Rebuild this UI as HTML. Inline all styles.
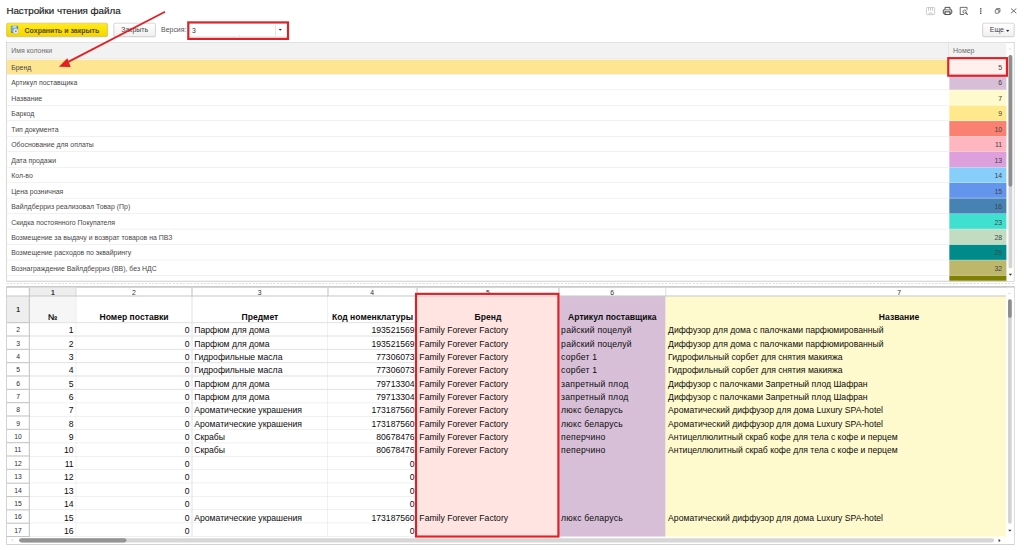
<!DOCTYPE html>
<html><head><meta charset="utf-8"><title>Настройки чтения файла</title>
<style>
html,body{margin:0;padding:0;background:#fff;}
body{width:1024px;height:550px;overflow:hidden;position:relative;font-family:"Liberation Sans",sans-serif;}
#w{position:absolute;left:0;top:0;width:1920px;height:1032px;transform:scale(0.533333);transform-origin:0 0;overflow:hidden;background:#fff;font-size:13px;color:#3c3c3c;}
#w div,#w span{position:absolute;box-sizing:border-box;white-space:nowrap;}
.btn{border:1px solid #b8b8b8;border-radius:3px;background:linear-gradient(#ffffff,#f0f0f0);box-shadow:0 1px 1px rgba(0,0,0,.18);text-align:center;line-height:24px;height:26px;top:43px;color:#444;}
.r1{left:13px;width:1766px;height:29px;border-bottom:1px solid #e4e4e4;line-height:31px;padding-left:8px;color:#484848;}
.c1{left:1780px;width:107px;height:29px;line-height:31px;border-bottom:1px solid rgba(255,255,255,.55);text-align:right;padding-right:8px;color:#444;}
.ss{font-size:16.2px;color:#0c0c0c;line-height:29.6px;height:25px;}
.hl{background:#efefef;}
.vl{background:#dcdcdc;width:1px;}
.rh{left:0;width:42.3px;height:25px;text-align:center;font-size:13px;line-height:25px;color:#333;border-bottom:1px solid #bdbdbd;border-right:1px solid #bdbdbd;}
.ch{top:0;height:17px;text-align:center;font-size:13px;line-height:18px;color:#333;border-right:1px solid #c4c4c4;border-bottom:1px solid #c4c4c4;}
</style></head><body><div id="w">

<div style="left:12px;top:8px;font-size:18.3px;line-height:24px;color:#1c1c1c;-webkit-text-stroke:0.35px #1c1c1c;">Настройки чтения файла</div>
<div class="btn" style="left:12px;width:190px;border-color:#c4ac00;background:linear-gradient(#ffea1c,#fbe000 60%,#f3d400);text-align:left;box-shadow:0 1px 1px rgba(0,0,0,.22);"><span style="left:33px;top:1px;font-weight:bold;font-size:13.2px;color:#554a06;line-height:24px;">Сохранить и закрыть</span><svg style="position:absolute;left:5px;top:2px" width="20" height="20" viewBox="17 45 20 20"><rect x="19.4" y="47.2" width="13.6" height="13.6" rx="1.6" fill="#3d8bdc"/><rect x="22.5" y="47.2" width="7.5" height="5" fill="#b9d6f4"/><rect x="20.6" y="48.5" width="2" height="10" fill="#8fbdec"/><circle cx="28.6" cy="57.6" r="5" fill="#f1f1f1" stroke="#a9a9a9" stroke-width="1"/><circle cx="28.6" cy="57.6" r="2" fill="#8a8a8a"/></svg></div>
<div class="btn" style="left:213px;width:79px;">Закрыть</div>
<div style="left:302px;top:43px;line-height:26px;color:#555;">Версия:</div>
<div style="left:354px;top:43px;width:186px;height:27px;border:1px solid #b4b4b4;border-radius:2px;background:#fff;line-height:25px;padding-left:5px;color:#333;">3</div>
<div style="left:516px;top:46px;width:1px;height:21px;background:#d0d0d0;"></div>
<svg style="position:absolute;left:522px;top:53.5px" width="7" height="4" viewBox="0 0 7 4"><path d="M0 0h7L3.5 3.8z" fill="#333"/></svg>
<div style="left:448.5px;top:65.5px;width:1.6px;height:1.6px;background:#8a8a8a;"></div>
<div class="btn" style="left:1842px;width:60px;text-align:left;padding-left:13px;">Еще</div>
<svg style="position:absolute;left:1886px;top:55.5px" width="7" height="4" viewBox="0 0 7 4"><path d="M0 0h7L3.5 3.8z" fill="#333"/></svg>
<div style="left:351px;top:39.5px;width:191px;height:35px;border:4.5px solid #e31e25;"></div>
<svg style="position:absolute;left:1730px;top:8px" width="184" height="26" viewBox="1730 8 184 26" fill="none">
<g stroke="#bdbdbd" stroke-width="1.4"><rect x="1737" y="14" width="15.5" height="13.5" rx="1.5"/><path d="M1741 14v6M1744.7 14v6M1748.4 14v6" stroke-width="1.6"/><path d="M1742 27.5v-3.2h5.5v3.2" /></g>
<g stroke="#3e3e3e" stroke-width="1.7"><rect x="1768.6" y="17.6" width="16" height="8.4" rx="2.6" fill="#cfcfcf"/><path d="M1772 17.6v-3.8h9.2v3.8" fill="#fff"/><rect x="1772" y="22.3" width="9.2" height="5" fill="#fff"/></g>
<g stroke="#444" stroke-width="1.45"><path d="M1813.2 18.5v-4.7h-12.8v13.4h7"/><circle cx="1808.6" cy="21.8" r="3"/><path d="M1810.9 24.2l3.4 3.4" stroke-width="1.9"/></g>
<g fill="#4a4a4a"><rect x="1837.6" y="15.2" width="2.6" height="2.6"/><rect x="1837.6" y="19.4" width="2.6" height="2.6"/><rect x="1837.6" y="23.6" width="2.6" height="2.6"/></g>
<g stroke="#444" stroke-width="1.35"><rect x="1866.2" y="18.2" width="6.6" height="6.6" rx="1"/><path d="M1868.6 18v-1.9h6.3v6.3h-1.9"/></g>
<g stroke="#444" stroke-width="1.45"><path d="M1895.6 16l10 8.8M1905.6 16l-10 8.8"/></g>
</svg>
<div style="left:12px;top:79px;width:1890px;height:449px;border:1px solid #b9b9b9;background:#fff;"></div>
<div style="left:13px;top:80px;width:1874px;height:31px;background:#f2f2f2;border-bottom:1px solid #e0e0e0;"></div>
<div style="left:21px;top:80px;line-height:31px;color:#6e6e6e;">Имя колонки</div>
<div style="left:1778px;top:80px;width:1px;height:31px;background:#d9d9d9;"></div>
<div style="left:1787px;top:80px;line-height:31px;color:#6e6e6e;">Номер</div>
<div style="left:13px;top:112px;width:1766px;height:27px;background:#fee591;"></div>
<div class="r1" style="top:111px;height:29px;">Бренд</div>
<div class="c1" style="top:111px;height:29px;background:#fff0ee;">5</div>
<div class="r1" style="top:140px;height:29px;">Артикул поставщика</div>
<div class="c1" style="top:140px;height:29px;background:#d8bfd8;">6</div>
<div class="r1" style="top:169px;height:29px;">Название</div>
<div class="c1" style="top:169px;height:29px;background:#fffacd;">7</div>
<div class="r1" style="top:198px;height:29px;">Баркод</div>
<div class="c1" style="top:198px;height:29px;background:#ffe98c;">9</div>
<div class="r1" style="top:227px;height:29px;">Тип документа</div>
<div class="c1" style="top:227px;height:29px;background:#fa8072;">10</div>
<div class="r1" style="top:256px;height:29px;">Обоснование для оплаты</div>
<div class="c1" style="top:256px;height:29px;background:#ffb6c1;">11</div>
<div class="r1" style="top:285px;height:29px;">Дата продажи</div>
<div class="c1" style="top:285px;height:29px;background:#dda0dd;">13</div>
<div class="r1" style="top:314px;height:29px;">Кол-во</div>
<div class="c1" style="top:314px;height:29px;background:#87cefa;">14</div>
<div class="r1" style="top:343px;height:29px;">Цена розничная</div>
<div class="c1" style="top:343px;height:29px;background:#6495ed;">15</div>
<div class="r1" style="top:372px;height:29px;">Вайлдберриз реализовал Товар (Пр)</div>
<div class="c1" style="top:372px;height:29px;background:#4682b4;">16</div>
<div class="r1" style="top:401px;height:29px;">Скидка постоянного Покупателя</div>
<div class="c1" style="top:401px;height:29px;background:#40e0d0;">23</div>
<div class="r1" style="top:430px;height:29px;">Возмещение за выдачу и возврат товаров на ПВЗ</div>
<div class="c1" style="top:430px;height:29px;background:#c1dcc1;">28</div>
<div class="r1" style="top:459px;height:29px;">Возмещение расходов по эквайрингу</div>
<div class="c1" style="top:459px;height:29px;background:#008b8b;">29</div>
<div class="r1" style="top:488px;height:29px;">Вознаграждение Вайлдберриз (ВВ), без НДС</div>
<div class="c1" style="top:488px;height:29px;background:#bdb76b;">32</div>
<div class="r1" style="top:517px;height:10px;"></div>
<div class="c1" style="top:517px;height:10px;background:#808000;"></div>
<div style="left:1890.5px;top:103px;width:7px;height:400px;border-radius:3.5px;background:#d3d3d3;"></div>
<div style="left:1890.5px;top:103px;width:7px;height:247px;border-radius:3.5px;background:#8e8e8e;"></div>
<svg style="position:absolute;left:1891px;top:89.5px" width="6" height="4" viewBox="0 0 6 4"><path d="M0.5 3.5L3 0.8 5.5 3.5" stroke="#c4c4c4" stroke-width="1.2" fill="none"/></svg>
<svg style="position:absolute;left:1890.5px;top:513px" width="7" height="4.5" viewBox="0 0 7 4.5"><path d="M0 0h7L3.5 4.2z" fill="#333"/></svg>
<div style="left:1776px;top:107px;width:114px;height:37px;border:4px solid #e31e25;"></div>
<div style="left:12px;top:531px;width:1890px;height:1px;background:repeating-linear-gradient(90deg,#c4c4c4 0 4px,transparent 4px 6.5px);"></div>
<div style="left:12px;top:536.5px;width:1890px;height:484.5px;border:1px solid #ababab;border-top:2px solid #a8a8a8;border-left:1.8px solid #adadad;background:#fff;overflow:hidden;" id="ss">
<div style="left:769.0px;top:16.7px;width:265.8px;height:450.5px;background:#ffe4e1;"></div>
<div style="left:1034.8px;top:16.7px;width:200.6px;height:450.5px;background:#d8bfd8;"></div>
<div style="left:1235.4px;top:16.7px;width:638.8px;height:450.5px;background:#fffacd;"></div>
<div style="left:41.5px;top:16.7px;width:88.1px;height:49.7px;background:#f6f6f6;"></div>
<div style="left:41.5px;top:0;width:88.1px;height:16.7px;background:#eeeeee;"></div>
<div style="left:0;top:16.7px;width:41.5px;height:49.7px;background:#eeeeee;"></div>
<div style="left:41.5px;top:65.7px;width:727.5px;height:1.4px;background:#e3e3e3;"></div>
<div style="left:41.5px;top:90.75px;width:727.5px;height:1.4px;background:#e3e3e3;"></div>
<div style="left:41.5px;top:115.8px;width:727.5px;height:1.4px;background:#e3e3e3;"></div>
<div style="left:41.5px;top:140.85000000000002px;width:727.5px;height:1.4px;background:#e3e3e3;"></div>
<div style="left:41.5px;top:165.9px;width:727.5px;height:1.4px;background:#e3e3e3;"></div>
<div style="left:41.5px;top:190.95000000000002px;width:727.5px;height:1.4px;background:#e3e3e3;"></div>
<div style="left:41.5px;top:216.0px;width:727.5px;height:1.4px;background:#e3e3e3;"></div>
<div style="left:41.5px;top:241.05px;width:727.5px;height:1.4px;background:#e3e3e3;"></div>
<div style="left:41.5px;top:266.1px;width:727.5px;height:1.4px;background:#e3e3e3;"></div>
<div style="left:41.5px;top:291.15000000000003px;width:727.5px;height:1.4px;background:#e3e3e3;"></div>
<div style="left:41.5px;top:316.2px;width:727.5px;height:1.4px;background:#e3e3e3;"></div>
<div style="left:41.5px;top:341.25px;width:727.5px;height:1.4px;background:#e3e3e3;"></div>
<div style="left:41.5px;top:366.3px;width:727.5px;height:1.4px;background:#e3e3e3;"></div>
<div style="left:41.5px;top:391.35px;width:727.5px;height:1.4px;background:#e3e3e3;"></div>
<div style="left:41.5px;top:416.40000000000003px;width:727.5px;height:1.4px;background:#e3e3e3;"></div>
<div style="left:41.5px;top:441.45px;width:727.5px;height:1.4px;background:#e3e3e3;"></div>
<div style="left:41.5px;top:466.5px;width:727.5px;height:1.4px;background:#e3e3e3;"></div>
<div style="left:128.9px;top:16.7px;width:1.4px;height:450.5px;background:#e3e3e3;"></div>
<div style="left:346.25px;top:16.7px;width:1.4px;height:450.5px;background:#e3e3e3;"></div>
<div style="left:601.0px;top:16.7px;width:1.4px;height:450.5px;background:#e3e3e3;"></div>
<div style="left:0;top:15.899999999999999px;width:1873.2px;height:1.6px;background:#cacaca;"></div>
<div style="left:40.5px;top:0;width:2px;height:468.2px;background:#c4c4c4;"></div>
<div style="left:128.7px;top:0;width:1.8px;height:16.7px;background:#c4c4c4;"></div>
<div style="left:346.05px;top:0;width:1.8px;height:16.7px;background:#c4c4c4;"></div>
<div style="left:600.8000000000001px;top:0;width:1.8px;height:16.7px;background:#c4c4c4;"></div>
<div style="left:768.1px;top:0;width:1.8px;height:16.7px;background:#c4c4c4;"></div>
<div style="left:1033.8999999999999px;top:0;width:1.8px;height:16.7px;background:#c4c4c4;"></div>
<div style="left:1234.5px;top:0;width:1.8px;height:16.7px;background:#c4c4c4;"></div>
<div style="left:0;top:65.4px;width:41.5px;height:2px;background:#c4c4c4;"></div>
<div style="left:0;top:90.45px;width:41.5px;height:2px;background:#c4c4c4;"></div>
<div style="left:0;top:115.5px;width:41.5px;height:2px;background:#c4c4c4;"></div>
<div style="left:0;top:140.55px;width:41.5px;height:2px;background:#c4c4c4;"></div>
<div style="left:0;top:165.6px;width:41.5px;height:2px;background:#c4c4c4;"></div>
<div style="left:0;top:190.65px;width:41.5px;height:2px;background:#c4c4c4;"></div>
<div style="left:0;top:215.7px;width:41.5px;height:2px;background:#c4c4c4;"></div>
<div style="left:0;top:240.75px;width:41.5px;height:2px;background:#c4c4c4;"></div>
<div style="left:0;top:265.8px;width:41.5px;height:2px;background:#c4c4c4;"></div>
<div style="left:0;top:290.85px;width:41.5px;height:2px;background:#c4c4c4;"></div>
<div style="left:0;top:315.9px;width:41.5px;height:2px;background:#c4c4c4;"></div>
<div style="left:0;top:340.95px;width:41.5px;height:2px;background:#c4c4c4;"></div>
<div style="left:0;top:366.0px;width:41.5px;height:2px;background:#c4c4c4;"></div>
<div style="left:0;top:391.05px;width:41.5px;height:2px;background:#c4c4c4;"></div>
<div style="left:0;top:416.1px;width:41.5px;height:2px;background:#c4c4c4;"></div>
<div style="left:0;top:441.15px;width:41.5px;height:2px;background:#c4c4c4;"></div>
<div style="left:0;top:466.2px;width:41.5px;height:2px;background:#c4c4c4;"></div>
<div style="left:41.5px;top:0;width:88.1px;height:16.7px;line-height:19.7px;font-size:14.2px;color:#2e2e2e;text-align:center;"><em style="font-style:normal;display:inline-block;transform:scaleX(.9);font-weight:bold;">1</em></div>
<div style="left:129.6px;top:0;width:217.35px;height:16.7px;line-height:19.7px;font-size:14.2px;color:#2e2e2e;text-align:center;"><em style="font-style:normal;display:inline-block;transform:scaleX(.9);">2</em></div>
<div style="left:346.95px;top:0;width:254.75px;height:16.7px;line-height:19.7px;font-size:14.2px;color:#2e2e2e;text-align:center;"><em style="font-style:normal;display:inline-block;transform:scaleX(.9);">3</em></div>
<div style="left:601.7px;top:0;width:167.3px;height:16.7px;line-height:19.7px;font-size:14.2px;color:#2e2e2e;text-align:center;"><em style="font-style:normal;display:inline-block;transform:scaleX(.9);">4</em></div>
<div style="left:769.0px;top:0;width:265.8px;height:16.7px;line-height:19.7px;font-size:14.2px;color:#2e2e2e;text-align:center;"><em style="font-style:normal;display:inline-block;transform:scaleX(.9);">5</em></div>
<div style="left:1034.8px;top:0;width:200.6px;height:16.7px;line-height:19.7px;font-size:14.2px;color:#2e2e2e;text-align:center;"><em style="font-style:normal;display:inline-block;transform:scaleX(.9);">6</em></div>
<div style="left:1235.4px;top:0;width:874.8px;height:16.7px;line-height:19.7px;font-size:14.2px;color:#2e2e2e;text-align:center;"><em style="font-style:normal;display:inline-block;transform:scaleX(.9);">7</em></div>
<div style="left:0;top:16.7px;width:41.5px;height:49.7px;line-height:50.7px;font-size:14.2px;color:#2e2e2e;text-align:center;"><em style="font-style:normal;display:inline-block;transform:scaleX(.9);font-weight:bold;">1</em></div>
<div style="left:0;top:66.4px;width:41.5px;height:25.05px;line-height:26.05px;font-size:14.2px;color:#2e2e2e;text-align:center;"><em style="font-style:normal;display:inline-block;transform:scaleX(.9);">2</em></div>
<div style="left:0;top:91.45px;width:41.5px;height:25.05px;line-height:26.05px;font-size:14.2px;color:#2e2e2e;text-align:center;"><em style="font-style:normal;display:inline-block;transform:scaleX(.9);">3</em></div>
<div style="left:0;top:116.5px;width:41.5px;height:25.05px;line-height:26.05px;font-size:14.2px;color:#2e2e2e;text-align:center;"><em style="font-style:normal;display:inline-block;transform:scaleX(.9);">4</em></div>
<div style="left:0;top:141.55px;width:41.5px;height:25.05px;line-height:26.05px;font-size:14.2px;color:#2e2e2e;text-align:center;"><em style="font-style:normal;display:inline-block;transform:scaleX(.9);">5</em></div>
<div style="left:0;top:166.6px;width:41.5px;height:25.05px;line-height:26.05px;font-size:14.2px;color:#2e2e2e;text-align:center;"><em style="font-style:normal;display:inline-block;transform:scaleX(.9);">6</em></div>
<div style="left:0;top:191.65px;width:41.5px;height:25.05px;line-height:26.05px;font-size:14.2px;color:#2e2e2e;text-align:center;"><em style="font-style:normal;display:inline-block;transform:scaleX(.9);">7</em></div>
<div style="left:0;top:216.7px;width:41.5px;height:25.05px;line-height:26.05px;font-size:14.2px;color:#2e2e2e;text-align:center;"><em style="font-style:normal;display:inline-block;transform:scaleX(.9);">8</em></div>
<div style="left:0;top:241.75px;width:41.5px;height:25.05px;line-height:26.05px;font-size:14.2px;color:#2e2e2e;text-align:center;"><em style="font-style:normal;display:inline-block;transform:scaleX(.9);">9</em></div>
<div style="left:0;top:266.8px;width:41.5px;height:25.05px;line-height:26.05px;font-size:14.2px;color:#2e2e2e;text-align:center;"><em style="font-style:normal;display:inline-block;transform:scaleX(.9);">10</em></div>
<div style="left:0;top:291.85px;width:41.5px;height:25.05px;line-height:26.05px;font-size:14.2px;color:#2e2e2e;text-align:center;"><em style="font-style:normal;display:inline-block;transform:scaleX(.9);">11</em></div>
<div style="left:0;top:316.9px;width:41.5px;height:25.05px;line-height:26.05px;font-size:14.2px;color:#2e2e2e;text-align:center;"><em style="font-style:normal;display:inline-block;transform:scaleX(.9);">12</em></div>
<div style="left:0;top:341.95px;width:41.5px;height:25.05px;line-height:26.05px;font-size:14.2px;color:#2e2e2e;text-align:center;"><em style="font-style:normal;display:inline-block;transform:scaleX(.9);">13</em></div>
<div style="left:0;top:367.0px;width:41.5px;height:25.05px;line-height:26.05px;font-size:14.2px;color:#2e2e2e;text-align:center;"><em style="font-style:normal;display:inline-block;transform:scaleX(.9);">14</em></div>
<div style="left:0;top:392.05px;width:41.5px;height:25.05px;line-height:26.05px;font-size:14.2px;color:#2e2e2e;text-align:center;"><em style="font-style:normal;display:inline-block;transform:scaleX(.9);">15</em></div>
<div style="left:0;top:417.1px;width:41.5px;height:25.05px;line-height:26.05px;font-size:14.2px;color:#2e2e2e;text-align:center;"><em style="font-style:normal;display:inline-block;transform:scaleX(.9);">16</em></div>
<div style="left:0;top:442.15px;width:41.5px;height:25.05px;line-height:26.05px;font-size:14.2px;color:#2e2e2e;text-align:center;"><em style="font-style:normal;display:inline-block;transform:scaleX(.9);">17</em></div>
<div class="ss" style="left:41.5px;top:41.75px;width:88.1px;text-align:center;font-weight:bold;font-size:16.1px;">№</div>
<div class="ss" style="left:129.6px;top:41.75px;width:217.35px;text-align:center;font-weight:bold;font-size:16.1px;">Номер поставки</div>
<div class="ss" style="left:346.95px;top:41.75px;width:254.75px;text-align:center;font-weight:bold;font-size:16.1px;">Предмет</div>
<div class="ss" style="left:601.7px;top:41.75px;width:167.3px;text-align:center;font-weight:bold;font-size:16.1px;">Код номенклатуры</div>
<div class="ss" style="left:769.0px;top:41.75px;width:265.8px;text-align:center;font-weight:bold;font-size:16.1px;">Бренд</div>
<div class="ss" style="left:1034.8px;top:41.75px;width:200.6px;text-align:center;font-weight:bold;font-size:16.1px;">Артикул поставщика</div>
<div class="ss" style="left:1235.4px;top:41.75px;width:874.8px;text-align:center;font-weight:bold;font-size:16.1px;">Название</div>
<div class="ss" style="left:41.5px;top:66.4px;width:88.1px;text-align:right;padding-right:4.5px;">1</div>
<div class="ss" style="left:129.6px;top:66.4px;width:217.35px;text-align:right;padding-right:4.5px;">0</div>
<div class="ss" style="left:346.95px;top:66.4px;width:254.75px;text-align:left;padding-left:4.3px;">Парфюм для дома</div>
<div class="ss" style="left:601.7px;top:66.4px;width:167.3px;text-align:right;padding-right:4.5px;">193521569</div>
<div class="ss" style="left:769.0px;top:66.4px;width:265.8px;text-align:left;padding-left:4.3px;">Family Forever Factory</div>
<div class="ss" style="left:1034.8px;top:66.4px;width:200.6px;text-align:left;padding-left:4.3px;letter-spacing:0.4px;">райский поцелуй</div>
<div class="ss" style="left:1235.4px;top:66.4px;width:874.8px;text-align:left;padding-left:4.3px;">Диффузор для дома с палочками парфюмированный</div>
<div class="ss" style="left:41.5px;top:91.45px;width:88.1px;text-align:right;padding-right:4.5px;">2</div>
<div class="ss" style="left:129.6px;top:91.45px;width:217.35px;text-align:right;padding-right:4.5px;">0</div>
<div class="ss" style="left:346.95px;top:91.45px;width:254.75px;text-align:left;padding-left:4.3px;">Парфюм для дома</div>
<div class="ss" style="left:601.7px;top:91.45px;width:167.3px;text-align:right;padding-right:4.5px;">193521569</div>
<div class="ss" style="left:769.0px;top:91.45px;width:265.8px;text-align:left;padding-left:4.3px;">Family Forever Factory</div>
<div class="ss" style="left:1034.8px;top:91.45px;width:200.6px;text-align:left;padding-left:4.3px;letter-spacing:0.4px;">райский поцелуй</div>
<div class="ss" style="left:1235.4px;top:91.45px;width:874.8px;text-align:left;padding-left:4.3px;">Диффузор для дома с палочками парфюмированный</div>
<div class="ss" style="left:41.5px;top:116.5px;width:88.1px;text-align:right;padding-right:4.5px;">3</div>
<div class="ss" style="left:129.6px;top:116.5px;width:217.35px;text-align:right;padding-right:4.5px;">0</div>
<div class="ss" style="left:346.95px;top:116.5px;width:254.75px;text-align:left;padding-left:4.3px;">Гидрофильные масла</div>
<div class="ss" style="left:601.7px;top:116.5px;width:167.3px;text-align:right;padding-right:4.5px;">77306073</div>
<div class="ss" style="left:769.0px;top:116.5px;width:265.8px;text-align:left;padding-left:4.3px;">Family Forever Factory</div>
<div class="ss" style="left:1034.8px;top:116.5px;width:200.6px;text-align:left;padding-left:4.3px;letter-spacing:0.4px;">сорбет 1</div>
<div class="ss" style="left:1235.4px;top:116.5px;width:874.8px;text-align:left;padding-left:4.3px;">Гидрофильный сорбет для снятия макияжа</div>
<div class="ss" style="left:41.5px;top:141.55px;width:88.1px;text-align:right;padding-right:4.5px;">4</div>
<div class="ss" style="left:129.6px;top:141.55px;width:217.35px;text-align:right;padding-right:4.5px;">0</div>
<div class="ss" style="left:346.95px;top:141.55px;width:254.75px;text-align:left;padding-left:4.3px;">Гидрофильные масла</div>
<div class="ss" style="left:601.7px;top:141.55px;width:167.3px;text-align:right;padding-right:4.5px;">77306073</div>
<div class="ss" style="left:769.0px;top:141.55px;width:265.8px;text-align:left;padding-left:4.3px;">Family Forever Factory</div>
<div class="ss" style="left:1034.8px;top:141.55px;width:200.6px;text-align:left;padding-left:4.3px;letter-spacing:0.4px;">сорбет 1</div>
<div class="ss" style="left:1235.4px;top:141.55px;width:874.8px;text-align:left;padding-left:4.3px;">Гидрофильный сорбет для снятия макияжа</div>
<div class="ss" style="left:41.5px;top:166.6px;width:88.1px;text-align:right;padding-right:4.5px;">5</div>
<div class="ss" style="left:129.6px;top:166.6px;width:217.35px;text-align:right;padding-right:4.5px;">0</div>
<div class="ss" style="left:346.95px;top:166.6px;width:254.75px;text-align:left;padding-left:4.3px;">Парфюм для дома</div>
<div class="ss" style="left:601.7px;top:166.6px;width:167.3px;text-align:right;padding-right:4.5px;">79713304</div>
<div class="ss" style="left:769.0px;top:166.6px;width:265.8px;text-align:left;padding-left:4.3px;">Family Forever Factory</div>
<div class="ss" style="left:1034.8px;top:166.6px;width:200.6px;text-align:left;padding-left:4.3px;letter-spacing:0.4px;">запретный плод</div>
<div class="ss" style="left:1235.4px;top:166.6px;width:874.8px;text-align:left;padding-left:4.3px;">Диффузор с палочками Запретный плод Шафран</div>
<div class="ss" style="left:41.5px;top:191.65px;width:88.1px;text-align:right;padding-right:4.5px;">6</div>
<div class="ss" style="left:129.6px;top:191.65px;width:217.35px;text-align:right;padding-right:4.5px;">0</div>
<div class="ss" style="left:346.95px;top:191.65px;width:254.75px;text-align:left;padding-left:4.3px;">Парфюм для дома</div>
<div class="ss" style="left:601.7px;top:191.65px;width:167.3px;text-align:right;padding-right:4.5px;">79713304</div>
<div class="ss" style="left:769.0px;top:191.65px;width:265.8px;text-align:left;padding-left:4.3px;">Family Forever Factory</div>
<div class="ss" style="left:1034.8px;top:191.65px;width:200.6px;text-align:left;padding-left:4.3px;letter-spacing:0.4px;">запретный плод</div>
<div class="ss" style="left:1235.4px;top:191.65px;width:874.8px;text-align:left;padding-left:4.3px;">Диффузор с палочками Запретный плод Шафран</div>
<div class="ss" style="left:41.5px;top:216.7px;width:88.1px;text-align:right;padding-right:4.5px;">7</div>
<div class="ss" style="left:129.6px;top:216.7px;width:217.35px;text-align:right;padding-right:4.5px;">0</div>
<div class="ss" style="left:346.95px;top:216.7px;width:254.75px;text-align:left;padding-left:4.3px;">Ароматические украшения</div>
<div class="ss" style="left:601.7px;top:216.7px;width:167.3px;text-align:right;padding-right:4.5px;">173187560</div>
<div class="ss" style="left:769.0px;top:216.7px;width:265.8px;text-align:left;padding-left:4.3px;">Family Forever Factory</div>
<div class="ss" style="left:1034.8px;top:216.7px;width:200.6px;text-align:left;padding-left:4.3px;letter-spacing:0.4px;">люкс беларусь</div>
<div class="ss" style="left:1235.4px;top:216.7px;width:874.8px;text-align:left;padding-left:4.3px;">Ароматический диффузор для дома Luxury SPA-hotel</div>
<div class="ss" style="left:41.5px;top:241.75px;width:88.1px;text-align:right;padding-right:4.5px;">8</div>
<div class="ss" style="left:129.6px;top:241.75px;width:217.35px;text-align:right;padding-right:4.5px;">0</div>
<div class="ss" style="left:346.95px;top:241.75px;width:254.75px;text-align:left;padding-left:4.3px;">Ароматические украшения</div>
<div class="ss" style="left:601.7px;top:241.75px;width:167.3px;text-align:right;padding-right:4.5px;">173187560</div>
<div class="ss" style="left:769.0px;top:241.75px;width:265.8px;text-align:left;padding-left:4.3px;">Family Forever Factory</div>
<div class="ss" style="left:1034.8px;top:241.75px;width:200.6px;text-align:left;padding-left:4.3px;letter-spacing:0.4px;">люкс беларусь</div>
<div class="ss" style="left:1235.4px;top:241.75px;width:874.8px;text-align:left;padding-left:4.3px;">Ароматический диффузор для дома Luxury SPA-hotel</div>
<div class="ss" style="left:41.5px;top:266.8px;width:88.1px;text-align:right;padding-right:4.5px;">9</div>
<div class="ss" style="left:129.6px;top:266.8px;width:217.35px;text-align:right;padding-right:4.5px;">0</div>
<div class="ss" style="left:346.95px;top:266.8px;width:254.75px;text-align:left;padding-left:4.3px;">Скрабы</div>
<div class="ss" style="left:601.7px;top:266.8px;width:167.3px;text-align:right;padding-right:4.5px;">80678476</div>
<div class="ss" style="left:769.0px;top:266.8px;width:265.8px;text-align:left;padding-left:4.3px;">Family Forever Factory</div>
<div class="ss" style="left:1034.8px;top:266.8px;width:200.6px;text-align:left;padding-left:4.3px;letter-spacing:0.4px;">пеперчино</div>
<div class="ss" style="left:1235.4px;top:266.8px;width:874.8px;text-align:left;padding-left:4.3px;">Антицеллюлитный скраб кофе для тела с кофе и перцем</div>
<div class="ss" style="left:41.5px;top:291.85px;width:88.1px;text-align:right;padding-right:4.5px;">10</div>
<div class="ss" style="left:129.6px;top:291.85px;width:217.35px;text-align:right;padding-right:4.5px;">0</div>
<div class="ss" style="left:346.95px;top:291.85px;width:254.75px;text-align:left;padding-left:4.3px;">Скрабы</div>
<div class="ss" style="left:601.7px;top:291.85px;width:167.3px;text-align:right;padding-right:4.5px;">80678476</div>
<div class="ss" style="left:769.0px;top:291.85px;width:265.8px;text-align:left;padding-left:4.3px;">Family Forever Factory</div>
<div class="ss" style="left:1034.8px;top:291.85px;width:200.6px;text-align:left;padding-left:4.3px;letter-spacing:0.4px;">пеперчино</div>
<div class="ss" style="left:1235.4px;top:291.85px;width:874.8px;text-align:left;padding-left:4.3px;">Антицеллюлитный скраб кофе для тела с кофе и перцем</div>
<div class="ss" style="left:41.5px;top:316.9px;width:88.1px;text-align:right;padding-right:4.5px;">11</div>
<div class="ss" style="left:129.6px;top:316.9px;width:217.35px;text-align:right;padding-right:4.5px;">0</div>
<div class="ss" style="left:601.7px;top:316.9px;width:167.3px;text-align:right;padding-right:4.5px;">0</div>
<div class="ss" style="left:41.5px;top:341.95px;width:88.1px;text-align:right;padding-right:4.5px;">12</div>
<div class="ss" style="left:129.6px;top:341.95px;width:217.35px;text-align:right;padding-right:4.5px;">0</div>
<div class="ss" style="left:601.7px;top:341.95px;width:167.3px;text-align:right;padding-right:4.5px;">0</div>
<div class="ss" style="left:41.5px;top:367.0px;width:88.1px;text-align:right;padding-right:4.5px;">13</div>
<div class="ss" style="left:129.6px;top:367.0px;width:217.35px;text-align:right;padding-right:4.5px;">0</div>
<div class="ss" style="left:601.7px;top:367.0px;width:167.3px;text-align:right;padding-right:4.5px;">0</div>
<div class="ss" style="left:41.5px;top:392.05px;width:88.1px;text-align:right;padding-right:4.5px;">14</div>
<div class="ss" style="left:129.6px;top:392.05px;width:217.35px;text-align:right;padding-right:4.5px;">0</div>
<div class="ss" style="left:601.7px;top:392.05px;width:167.3px;text-align:right;padding-right:4.5px;">0</div>
<div class="ss" style="left:41.5px;top:417.1px;width:88.1px;text-align:right;padding-right:4.5px;">15</div>
<div class="ss" style="left:129.6px;top:417.1px;width:217.35px;text-align:right;padding-right:4.5px;">0</div>
<div class="ss" style="left:346.95px;top:417.1px;width:254.75px;text-align:left;padding-left:4.3px;">Ароматические украшения</div>
<div class="ss" style="left:601.7px;top:417.1px;width:167.3px;text-align:right;padding-right:4.5px;">173187560</div>
<div class="ss" style="left:769.0px;top:417.1px;width:265.8px;text-align:left;padding-left:4.3px;">Family Forever Factory</div>
<div class="ss" style="left:1034.8px;top:417.1px;width:200.6px;text-align:left;padding-left:4.3px;letter-spacing:0.4px;">люкс беларусь</div>
<div class="ss" style="left:1235.4px;top:417.1px;width:874.8px;text-align:left;padding-left:4.3px;">Ароматический диффузор для дома Luxury SPA-hotel</div>
<div class="ss" style="left:41.5px;top:442.15px;width:88.1px;text-align:right;padding-right:4.5px;">16</div>
<div class="ss" style="left:129.6px;top:442.15px;width:217.35px;text-align:right;padding-right:4.5px;">0</div>
<div class="ss" style="left:601.7px;top:442.15px;width:167.3px;text-align:right;padding-right:4.5px;">0</div>
<div style="left:1874.2px;top:0;width:14px;height:483px;background:#fff;"></div>
<div style="left:0;top:468.2px;width:1888px;height:16px;background:#fff;"></div>
<div style="left:1876.7px;top:22.0px;width:7px;height:421.5px;border-radius:3.5px;background:#d3d3d3;"></div>
<div style="left:1876.7px;top:22.0px;width:7px;height:35.5px;border-radius:3.5px;background:#8e8e8e;"></div>
<svg style="position:absolute;left:1877.2px;top:9.0px" width="6" height="4" viewBox="0 0 6 4"><path d="M0.5 3.5L3 0.8 5.5 3.5" stroke="#c4c4c4" stroke-width="1.2" fill="none"/></svg>
<svg style="position:absolute;left:1876.7px;top:454.0px" width="7" height="4.5" viewBox="0 0 7 4.5"><path d="M0 0h7L3.5 4.2z" fill="#333"/></svg>
<div style="left:22.7px;top:470.8px;width:1828.0px;height:8px;border-radius:4px;background:#d6d6d6;"></div>
<div style="left:22.7px;top:470.8px;width:201.5px;height:8px;border-radius:4px;background:#949494;"></div>
<svg style="position:absolute;left:8.2px;top:471.8px" width="4" height="6" viewBox="0 0 4 6"><path d="M3.5 0.5L0.8 3 3.5 5.5" stroke="#c4c4c4" stroke-width="1.2" fill="none"/></svg>
<svg style="position:absolute;left:1859.2px;top:471.3px" width="4.5" height="7" viewBox="0 0 4.5 7"><path d="M0 0v7L4.2 3.5z" fill="#333"/></svg>
</div>
<div style="left:778px;top:549px;width:271px;height:458.5px;border:4.3px solid #e31e25;"></div>
<svg style="position:absolute;left:0;top:0" width="400" height="160" viewBox="0 0 400 160"><path d="M309.5 22L128 116" stroke="#e31e25" stroke-width="3.3" fill="none"/><path d="M110.4 125L126.2 109.3 132.6 125.6z" fill="#e31e25"/></svg>
</div></body></html>
